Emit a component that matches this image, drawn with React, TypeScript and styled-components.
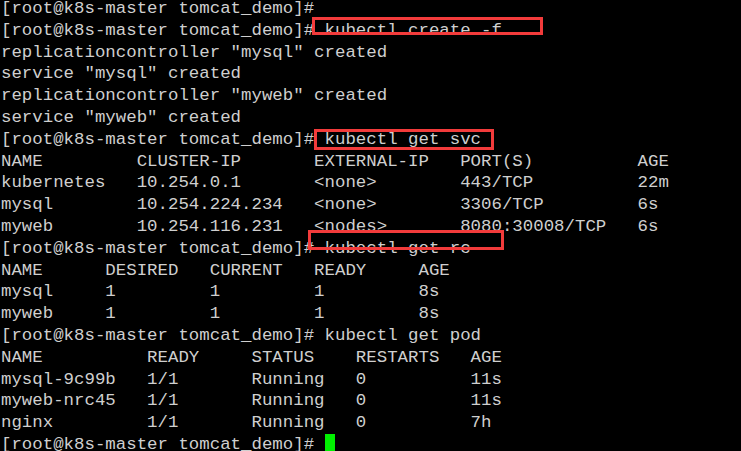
import React from "react";
import styled, { createGlobalStyle } from "styled-components";

const GlobalStyle = createGlobalStyle`
  html, body {
    margin: 0;
    padding: 0;
    background: #000000;
  }
  body {
    width: 741px;
    height: 451px;
    overflow: hidden;
  }
`;

const Screen = styled.div`
  position: relative;
  margin-top: -2px;
  padding: 0 0 0 1px;
  font-family: "Liberation Mono", "DejaVu Sans Mono", monospace;
  font-size: 17.4px;
  color: #cfcfcf;
  background: #000000;
`;

const Line = styled.div`
  white-space: pre;
  height: 21.8px;
  line-height: 21.8px;
`;

const Cursor = styled.span`
  display: inline-block;
  width: 10.5px;
  height: 19px;
  vertical-align: -4px;
  background: #00f000;
`;

const Callout = styled.div<{ $x: number; $y: number; $w: number; $h: number }>`
  position: absolute;
  left: ${(p) => p.$x}px;
  top: ${(p) => p.$y}px;
  width: ${(p) => p.$w}px;
  height: ${(p) => p.$h}px;
  box-sizing: border-box;
  border: 3px solid #f23b3b;
  pointer-events: none;
`;

const PROMPT = "[root@k8s-master tomcat_demo]# ";

const lines: string[] = [
  "[root@k8s-master tomcat_demo]#",
  PROMPT + "kubectl create -f .",
  'replicationcontroller "mysql" created',
  'service "mysql" created',
  'replicationcontroller "myweb" created',
  'service "myweb" created',
  PROMPT + "kubectl get svc",
  "NAME         CLUSTER-IP       EXTERNAL-IP   PORT(S)          AGE",
  "kubernetes   10.254.0.1       <none>        443/TCP          22m",
  "mysql        10.254.224.234   <none>        3306/TCP         6s",
  "myweb        10.254.116.231   <nodes>       8080:30008/TCP   6s",
  PROMPT + "kubectl get rc",
  "NAME      DESIRED   CURRENT   READY     AGE",
  "mysql     1         1         1         8s",
  "myweb     1         1         1         8s",
  PROMPT + "kubectl get pod",
  "NAME          READY     STATUS    RESTARTS   AGE",
  "mysql-9c99b   1/1       Running   0          11s",
  "myweb-nrc45   1/1       Running   0          11s",
  "nginx         1/1       Running   0          7h",
];

export default function App() {
  return (
    <>
      <GlobalStyle />
      <Screen>
        {lines.map((l, i) => (
          <Line key={i}>{l}</Line>
        ))}
        <Line>
          {PROMPT}
          <Cursor />
        </Line>
        <Callout $x={311.5} $y={18.5} $w={231.5} $h={18} />
        <Callout $x={313.5} $y={130.7} $w={180} $h={21.6} />
        <Callout $x={307.7} $y={231.7} $w={196} $h={20} />
      </Screen>
    </>
  );
}
